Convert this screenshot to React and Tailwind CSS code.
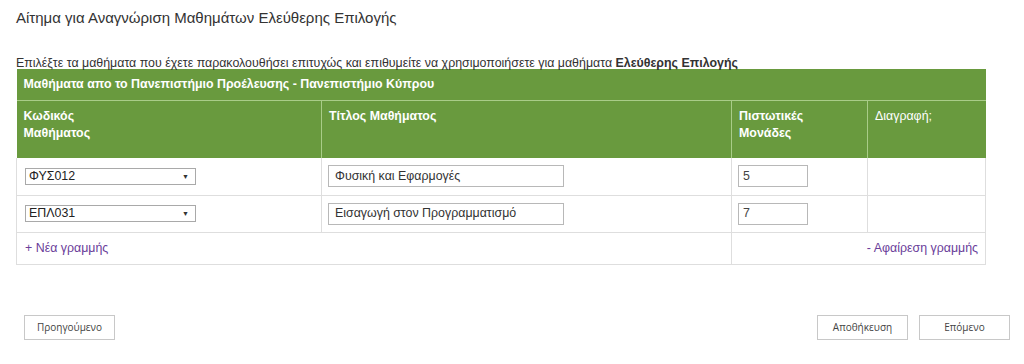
import { useState } from 'react'

// 과목 행 데이터
const initialRows = [
  { code: 'ΦΥΣ012', title: 'Φυσική και Εφαρμογές', credits: '5' },
  { code: 'ΕΠΛ031', title: 'Εισαγωγή στον Προγραμματισμό', credits: '7' }
]

function CodeSelect({ value }) {
  return (
    <div className="flex h-[17px] w-[171px] items-center justify-between border border-[#a9a9a9] bg-white pl-[3px] pr-[6px] text-[12.4px] leading-none text-[#222]">
      <span>{value}</span>
      <span className="text-[7px] text-[#333]">▼</span>
    </div>
  )
}

function NavButton({ children }) {
  return (
    <button className="h-[25px] w-[91px] border border-[#c8c8c8] bg-white text-[10px] text-[#444] [font-family:'Open_Sans',sans-serif]">
      {children}
    </button>
  )
}

export default function App() {
  const [rows] = useState(initialRows)

  return (
    <div className="h-[364px] w-[1024px] bg-white text-[#333] [font-family:'Liberation_Sans',Arial,sans-serif]">
      <h1 className="px-[16px] pt-[9px] text-[15px] leading-[18px] text-[#333]">
        Αίτημα για Αναγνώριση Μαθημάτων Ελεύθερης Επιλογής
      </h1>

      <p className="mt-[29px] px-[16px] text-[12.4px] leading-[14px]">
        Επιλέξτε τα μαθήματα που έχετε παρακολουθήσει επιτυχώς και επιθυμείτε να χρησιμοποιήσετε για μαθήματα{' '}
        <b>Ελεύθερης Επιλογής</b>
      </p>

      <table className="mx-[16px] mt-[-1px] w-[969px] table-fixed border-collapse text-[12.4px]">
        <colgroup>
          <col className="w-[305px]" />
          <col className="w-[410px]" />
          <col className="w-[136px]" />
          <col className="w-[118px]" />
        </colgroup>
        <thead>
          <tr className="h-[31px] bg-[#699a3e]">
            <th colSpan={4} className="border-b border-[#a9cc88] px-[7px] text-left font-bold text-white">
              Μαθήματα απο το Πανεπιστήμιο Προέλευσης - Πανεπιστήμιο Κύπρου
            </th>
          </tr>
          <tr className="h-[58px] bg-[#699a3e] align-top text-white">
            <th className="px-[7px] pt-[7px] text-left font-bold leading-[17px]">
              Κωδικός
              <br />
              Μαθήματος
            </th>
            <th className="border-l border-[#a9cc88] px-[7px] pt-[7px] text-left font-bold leading-[17px]">
              Τίτλος Μαθήματος
            </th>
            <th className="border-l border-[#a9cc88] px-[7px] pt-[7px] text-left font-bold leading-[17px]">
              Πιστωτικές
              <br />
              Μονάδες
            </th>
            <th className="border-l border-[#a9cc88] px-[7px] pt-[7px] text-left font-normal leading-[17px]">
              Διαγραφή;
            </th>
          </tr>
        </thead>
        <tbody>
          {rows.map((row) => (
            <tr key={row.code} className="h-[37px] border-b border-[#dedede]">
              <td className="border-l border-[#dedede] px-[8px]">
                <CodeSelect value={row.code} />
              </td>
              <td className="border-l border-[#dedede] px-[6px]">
                <div className="flex h-[22px] w-[236px] items-center border border-[#b8b8b8] px-[6px] text-[12.4px] text-[#333]">
                  {row.title}
                </div>
              </td>
              <td className="border-l border-[#dedede] px-[6px]">
                <div className="flex h-[22px] w-[70px] items-center border border-[#b8b8b8] px-[4px] text-[12.4px] text-[#444]">
                  {row.credits}
                </div>
              </td>
              <td className="border-x border-[#dedede]" />
            </tr>
          ))}
          <tr className="h-[32px] border-b border-[#dedede]">
            <td colSpan={2} className="border-l border-[#dedede] px-[8px] text-[#6a3d9a]">
              + Νέα γραμμής
            </td>
            <td colSpan={2} className="border-x border-[#dedede] px-[7px] text-right text-[#6a3d9a]">
              - Αφαίρεση γραμμής
            </td>
          </tr>
        </tbody>
      </table>

      <div className="mt-[50px] flex items-center justify-between pl-[24px] pr-[14px]">
        <NavButton>Προηγούμενο</NavButton>
        <div className="flex gap-[11px]">
          <NavButton>Αποθήκευση</NavButton>
          <NavButton>Επόμενο</NavButton>
        </div>
      </div>
    </div>
  )
}
